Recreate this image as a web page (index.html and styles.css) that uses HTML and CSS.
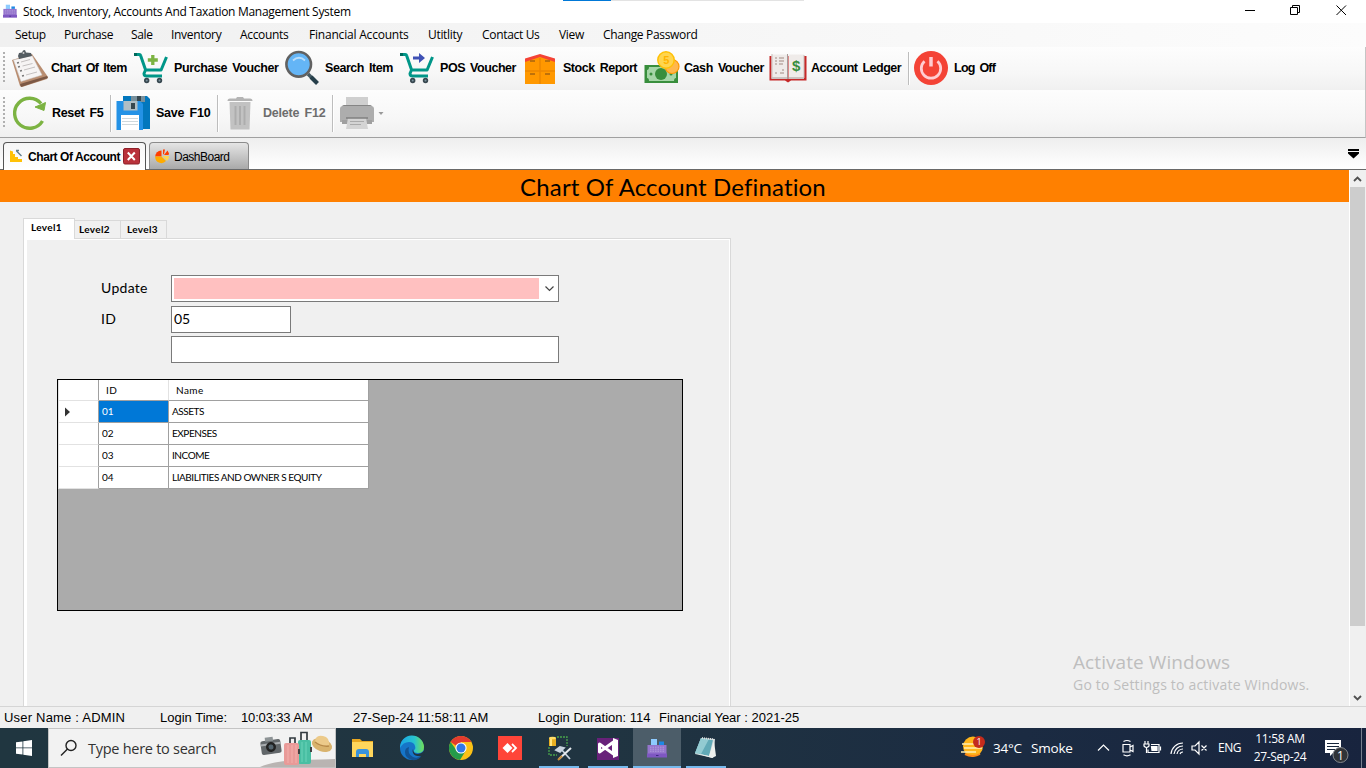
FILE: index.html
```html
<!DOCTYPE html>
<html lang="en">
<head>
<meta charset="utf-8">
<title>Stock, Inventory, Accounts And Taxation Management System</title>
<link rel="stylesheet" href="styles.css">
</head>
<body>
<svg class="defs" width="0" height="0">
  <defs>
    <symbol id="register" viewBox="0 0 20 20">
      <path d="M4 1h6v7H4z" fill="#8ecbff"/><path d="M12 3.500h5v3.500h-5z" fill="#1e88e5"/>
      <path d="M.500 7h19v9H.500z" fill="#9575cd"/><path d="M0 15.500h20v4H0z" fill="#7e57c2"/>
      <path d="M3 9.200h14M3 11.200h14M3 13.200h14" stroke="#b39ddb" stroke-width="1" stroke-dasharray="1.500 1"/><path d="M9 17.500h2.500" stroke="#3f2a80" stroke-width="1"/>
    </symbol>
    <symbol id="cart" viewBox="0 0 40 40">
      <path d="M1 6.500h4.300q1 0 1.300 1l5 14.500h15.500L32.500 9M11.500 22l-1.500 3.500q0 2.500 2.500 2.500H28" fill="none" stroke="#009688" stroke-width="3" stroke-linejoin="round"/>
      <path d="M0 6.500h3" stroke="#00695c" stroke-width="3"/>
      <circle cx="12.700" cy="32.500" r="2.700" fill="#37474f"/><circle cx="25.500" cy="32.500" r="2.700" fill="#37474f"/>
      <circle cx="12.700" cy="32.500" r="1" fill="#78909c"/><circle cx="25.500" cy="32.500" r="1" fill="#78909c"/>
    </symbol>
  </defs>
</svg>
<div class="window">
  <header class="titlebar">
    <svg class="app-icon" width="14" height="14"><use href="#register"/></svg>
    <span class="title">Stock, Inventory, Accounts And Taxation Management System</span>
    <div class="loading"></div>
    <svg class="controls" width="120" height="23" viewBox="0 0 120 23" fill="none" stroke="#000">
      <path d="M4 10.500h10M49.500 7.500h7v7h-7zM51.500 7v-1.500h7v7H57M95.500 5.500l9.500 9.500M105 5.500L95.500 15"/>
    </svg>
  </header>
  <nav class="menu">
    <span>Setup</span><span>Purchase</span><span>Sale</span><span>Inventory</span><span>Accounts</span><span>Financial Accounts</span><span>Utitlity</span><span>Contact Us</span><span>View</span><span>Change Password</span>
  </nav>
  <div class="toolbar main-tools">
    <i class="grip"></i>
    <div class="tool t1"><svg width="40" height="40" viewBox="0 0 40 40">
      <path d="M1 12l20-6 16 23-1 2-25 8-2-1z" fill="#b98d70"/><path d="M9 36l27-8 1 2-27 9z" fill="#7b5845"/>
      <path d="M2.500 12L21 7.500 31 27 10 33.500z" fill="#f6f4f4" stroke="#ccc" stroke-width=".5"/>
      <path d="M7 8l1-3 3-.5 1-2 2-.5 1 2.500 5 .5 1 3-13 3z" fill="#545c61"/><circle cx="12.500" cy="5" r="1" fill="#ccc"/>
      <path d="M6 15l2-.5M7 19l2-.5M9 23l2-.5M11 28l2-.5" stroke="#777" stroke-width="1.600"/><path d="M10 14l9-2.500M11.500 18l10-2.500M13 22l11-3M15 27l11-3" stroke="#c4c0c0"/>
    </svg><span>Chart Of Item</span></div>
    <div class="tool t2"><svg width="40" height="40" viewBox="0 0 40 40"><use href="#cart"/><path d="M18.800 7v10M13.800 12h10" stroke="#7cb342" stroke-width="3.300"/></svg><span>Purchase Voucher</span></div>
    <div class="tool t3"><svg width="40" height="40" viewBox="0 0 40 40">
      <path d="M23 26l9 9" stroke="#455a64" stroke-width="3.500"/><path d="M26 29l6.500 6.500" stroke="#263f4a" stroke-width="4"/>
      <circle cx="13.700" cy="16.300" r="12.300" fill="#64b5f6" stroke="#616161" stroke-width="2.600"/><path d="M8 12.500q6-5.500 12 0" fill="none" stroke="#bbdefb" stroke-width="1.800"/>
    </svg><span>Search Item</span></div>
    <div class="tool t4"><svg width="40" height="40" viewBox="0 0 40 40"><use href="#cart"/><path d="M13 8.500h6v-3.500l6 5-6 5v-3.500h-6z" fill="#3f51b5"/></svg><span>POS Voucher</span></div>
    <div class="tool t5"><svg width="38" height="40" viewBox="0 0 38 40">
      <path d="M0 13L15 7l15 6v23H0z" fill="#ff9800"/><path d="M15 10v26M0 23h30" stroke="#ed8600" stroke-width="1.500"/><path d="M0 10.500L15 6l15 4.500V14L15 9 0 14z" fill="#f44336"/>
      <path d="M5 13h5M20 13h5M5 26h5M20 26h5" stroke="#7d4b14"/>
    </svg><span>Stock Report</span></div>
    <div class="tool t6"><svg width="40" height="40" viewBox="0 0 40 40">
      <path d="M.500 17h33.500v18H.500z" fill="#388e3c"/><path d="M5 19h25q0 3 2 3v8q-2 0-2 3H5q0-3-2-3v-8q2 0 2-3z" fill="#a5d6a7"/><circle cx="17" cy="26" r="6" fill="#388e3c"/><circle cx="7" cy="26" r="1.500" fill="#388e3c"/><circle cx="27" cy="26" r="1.500" fill="#388e3c"/>
      <circle cx="28" cy="18.500" r="7" fill="#ffb74d" stroke="#ff9800" stroke-width="1.200"/><circle cx="22" cy="12" r="8.200" fill="#ffd54f" stroke="#ffc107" stroke-width="1.500"/><text class="coin" x="22" y="16" text-anchor="middle">5</text>
    </svg><span>Cash Voucher</span></div>
    <div class="tool t7"><svg width="42" height="40" viewBox="0 0 42 40">
      <path d="M.500 8h37v24.500H22l-3 2-3-2H.500z" fill="#c62828"/><path d="M2.500 6.500h15.500V31H2.500zM19.500 6.500H35V31H19.500z" fill="#efebe9"/><path d="M18.500 6v25M2 30h33" stroke="#a69a98"/><path d="M3 6v24M35 7v23" stroke="#cbbfbc"/>
      <path d="M6 10h2M10 10h5M6 13h2M10 13h5M6 16h2M10 16h4M13 22h2M6 25h2M11 25h4" stroke="#bcaaa4" stroke-width="1.300"/><text class="dollar" x="27" y="22.500" text-anchor="middle">$</text>
    </svg><span>Account Ledger</span></div>
    <i class="sep s1"></i>
    <div class="tool t8"><svg width="40" height="40" viewBox="0 0 40 40"><circle cx="17" cy="20" r="17" fill="#f44336"/><path d="M10.500 13.300a9.700 9.700 0 1 0 13 0" fill="none" stroke="#ffcdd2" stroke-width="2.800"/><path d="M17 9v9.500" stroke="#ffcdd2" stroke-width="3.500"/></svg><span>Log Off</span></div>
  </div>
  <div class="toolbar edit-tools">
    <i class="grip"></i>
    <div class="tool e1"><svg width="40" height="40" viewBox="0 0 40 40"><path d="M29 10.500A15 15 0 1 0 30.500 28" fill="none" stroke="#7cb342" stroke-width="3.400"/><path d="M33.500 9.500l-1.500 8-9-3.500 5-2z" fill="#7cb342" stroke="#7cb342"/></svg><span>Reset F5</span></div>
    <i class="sep s2"></i>
    <div class="tool e2"><svg width="40" height="40" viewBox="0 0 40 40">
      <path d="M7 3h24l3 3v30H7z" fill="#0277bd"/><path d="M15 3h14v6H15z" fill="#78909c"/><path d="M21 3h4v5h-4z" fill="#37474f"/>
      <path d="M.500 8H24l3 3v26H.500z" fill="#2492e6"/><path d="M7.500 8h14v9.500h-14z" fill="#b0bec5"/><path d="M15 10h4v6h-4z" fill="#37474f"/><path d="M5 22h18v15H5z" fill="#fff"/><path d="M6 25.500h16M6 28.500h16M6 31.500h16" stroke="#cfd8dc"/>
    </svg><span>Save F10</span></div>
    <i class="sep s3"></i>
    <div class="tool e3"><svg width="36" height="40" viewBox="0 0 36 40"><path d="M.500 8q0-2.500 2.500-2.500h6l1-1.500h6l1 1.500h6q2.500 0 2.500 2.500z" fill="#b4b4b4"/><path d="M2.500 9h21l-1 27.500h-19z" fill="#c2c2c2"/><path d="M8.500 13v19M13 13v19M17.500 13v19" stroke="#adadad" stroke-width="2"/></svg><span>Delete F12</span></div>
    <i class="sep s4"></i>
    <svg class="printer" width="46" height="40" viewBox="0 0 46 40"><path d="M6 4h22v10H6z" fill="#cfcfcf"/><path d="M2 14q0-2 2-2h26q2 0 2 2z" fill="#858585"/><path d="M0 16q0-3 3-3h28q3 0 3 3v13H0z" fill="#adadad"/><path d="M2 27h30v4H2z" fill="#a0a0a0"/><path d="M8 25h18l2 11H6z" fill="#d4d4d4"/><path d="M10 28.500h14M10 31.500h11" stroke="#aaa"/><path d="M6 25h22" stroke="#808080" stroke-width="1.500"/><path d="M38.500 19h5l-2.500 3z" fill="#999"/></svg>
  </div>
  <div class="doc-tabs">
    <div class="doc-tab active"><svg width="15" height="15" viewBox="0 0 15 15"><path d="M1 1.500l3 1v2.500h2v3h3v2h4V13H1z" fill="#ffc107"/><path d="M7 1.500h3M7.500 2l5 5" stroke="#607d8b" stroke-width="1.400"/></svg><span>Chart Of Account</span><svg class="close" width="17" height="17" viewBox="0 0 17 17"><rect x=".5" y=".5" width="16" height="15.500" rx="1.500" fill="#b9313b" stroke="#8d2029"/><path d="M4.800 4.500l7 7.500M11.800 4.500l-7 7.500" stroke="#fff" stroke-width="2"/></svg></div>
    <div class="doc-tab"><svg width="15" height="15" viewBox="0 0 15 15"><path d="M6.500 7.500V1.500A6 6 0 0 0 .200 7.500z" fill="#ff3d00"/><path d="M.200 7.500h6.300l4.500 4.500A6.200 6.200 0 0 1 .200 7.500z" fill="#ffab00"/><path d="M7.500 7h6.500q0 3-2 5z" fill="#ffd54f"/><path d="M8 5.500V.500h2L9 5zM9 6l3.500-4.500 1.500 3-.5 1.500z" fill="#ff3d00"/></svg><span>DashBoard</span></div>
    <svg class="overflow" width="12" height="11" viewBox="0 0 12 11"><path d="M0 1h11v2H0zM0 4h11v1.500l-5.500 5L0 5.500z"/></svg>
  </div>
  <main class="content">
    <section class="page">
      <h1>Chart Of Account Defination</h1>
      <div class="levels">
        <div class="level-tabs"><span class="on">Level1</span><span>Level2</span><span>Level3</span></div>
        <div class="panel">
          <div class="fields">
            <label>Update</label><div class="field combo"><i></i><svg width="17" height="20" viewBox="0 0 17 20"><path d="M6.500 8.500l4 4 4-4" fill="none" stroke="#444" stroke-width="1.200"/></svg></div>
            <label>ID</label><div class="field short">05</div>
            <label></label><div class="field"></div>
          </div>
          <div class="datagrid">
            <table>
              <tr class="head"><td></td><td>ID</td><td>Name</td></tr>
              <tr><td><svg width="6" height="10" viewBox="0 0 6 10"><path d="M0 0.500l5 4.500-5 4.500z" fill="#333"/></svg></td><td class="selected">01</td><td>ASSETS</td></tr>
              <tr><td></td><td>02</td><td>EXPENSES</td></tr>
              <tr><td></td><td>03</td><td>INCOME</td></tr>
              <tr><td></td><td>04</td><td>LIABILITIES AND OWNER S EQUITY</td></tr>
            </table>
          </div>
        </div>
      </div>
    </section>
    <div class="scroll"><svg width="15" height="17" viewBox="0 0 15 17"><path d="M4 11l3.500-3.500L11 11" fill="none" stroke="#505050" stroke-width="1.800"/></svg><i></i><svg width="15" height="17" viewBox="0 0 15 17"><path d="M4 7l3.500 3.500L11 7" fill="none" stroke="#505050" stroke-width="1.800"/></svg></div>
    <div class="watermark"><p class="wm-title">Activate Windows</p><p class="wm-note">Go to Settings to activate Windows.</p></div>
  </main>
  <div class="status"><span class="user">User Name : ADMIN</span><span>Login Time:</span><span class="login">10:03:33 AM</span><span>27-Sep-24 11:58:11 AM</span><span>Login Duration: 114</span><span>Financial Year : 2021-25</span></div>
  <footer class="taskbar">
    <div class="start"><svg width="16" height="16" viewBox="0 0 16 16" fill="#fff"><path d="M0 2.300l6.500-.9v6.100H0zM7.300 1.300L16 0v7.500H7.300zM0 8.300h6.500v6.300L0 13.700zM7.300 8.300H16V16l-8.700-1.200z"/></svg></div>
    <div class="search">
      <svg width="18" height="18" viewBox="0 0 18 18" fill="none" stroke="#222" stroke-width="1.400"><circle cx="11" cy="6.500" r="5"/><path d="M7.500 10L1 16.500"/></svg>
      <span>Type here to search</span>
      <svg class="travel" width="75" height="38" viewBox="0 0 75 38">
        <path d="M0 38Q12 32 42 31T75 30v8z" fill="#b9b4b2"/>
        <g transform="rotate(-8 11 18)"><rect x="1" y="11" width="20" height="14" rx="2" fill="#62676a"/><path d="M6 8h8v4H6z" fill="#8d9395"/><path d="M1 14h20v2H1z" fill="#a9adb0"/><circle cx="11" cy="18" r="5" fill="#222"/><circle cx="11" cy="18" r="2.500" fill="#53636d"/></g>
        <path d="M30 15V9h5v6M41 12V3.500h6V12" fill="none" stroke="#333b40" stroke-width="1.700"/>
        <rect x="38" y="11" width="13" height="24" rx="2" fill="#49bfa3"/><path d="M42 13v20M46 13v20" stroke="#6dd3b9"/><rect x="24" y="14" width="15" height="22" rx="2" fill="#e99a98"/><path d="M28 16v18M32 16v18M36 16v18" stroke="#f4b0ac"/>
        <path d="M39 20v5M51 18v5" stroke="#424242" stroke-width="2"/>
        <ellipse cx="62" cy="16" rx="10.500" ry="6.500" transform="rotate(20 62 16)" fill="#d9b36d"/><path d="M55 14q0-9 8-7 7 1 6 10-8 2-14-3z" fill="#ecca8a"/><path d="M55 13q6 5 14 4" fill="none" stroke="#b88b49" stroke-width="1.500"/>
      </svg>
    </div>
    <div class="apps">
      <div><svg width="24" height="24" viewBox="0 0 24 24"><path d="M1 3h8l2 2h11v16H1z" fill="#e9a821"/><path d="M1 6h21v15H1z" fill="#ffd65c"/><path d="M5 21v-5q0-3 3-3h7q3 0 3 3v5h-3v-3H8v3z" fill="#3993dd"/></svg></div>
      <div><svg width="26" height="26" viewBox="0 0 26 26"><defs><linearGradient id="edge" x1="0" x2="1"><stop offset="0" stop-color="#1aa5e6"/><stop offset=".6" stop-color="#28c4cf"/><stop offset="1" stop-color="#73df55"/></linearGradient></defs><circle cx="13" cy="13" r="12" fill="#1675c8"/><path d="M1 13A12 12 0 0 1 25 12q0 6-6 6-5 0-4-3 2-1 1-4-1-4-6-4-6 0-9 6z" fill="url(#edge)"/><path d="M10 12q-2 7 4 10 5 2 9-2-3 6-10 5-7-2-7-8 0-4 4-5z" fill="#125394"/><path d="M14 14q0 5 5 5 3 0 6-3l1 3-3 2q-7 1-9-3-1-2 0-4z" fill="#203441"/></svg></div>
      <div><svg width="24" height="24" viewBox="0 0 24 24"><circle cx="12" cy="12" r="12" fill="#fbc116"/><path d="M1.600 6A12 12 0 0 1 22.400 6H12v7z" fill="#e33b2e"/><path d="M1.600 6A12 12 0 0 0 11 24l5.500-9L12 12l-4 3z" fill="#259b4a"/><circle cx="12" cy="12" r="5.600" fill="#fff"/><circle cx="12" cy="12" r="4.500" fill="#3278e8"/></svg></div>
      <div><svg width="24" height="24" viewBox="0 0 24 24"><path d="M0 0h24v24H0z" fill="#ff4539"/><path d="M9.500 7l5 5-5 5-5-5z" fill="#fff"/><path d="M14 8l4 4-4 4" fill="none" stroke="#fff" stroke-width="1.800"/></svg></div>
      <div class="run"><svg width="25" height="26" viewBox="0 0 25 26"><path d="M10 2h10v9M2 12v8h8" fill="none" stroke="#48a34b" stroke-width="1.300" stroke-dasharray="2 1"/><path d="M2 3h7v8H2z" fill="#e7ae21"/><path d="M3 3h2v8H3z" fill="#ffe580"/><ellipse cx="5.500" cy="3" rx="3.500" ry="1.300" fill="#ffdc66"/><path d="M9 15l4-3 4 1-4 4zM14 14l9 10" fill="#c8d3df" stroke="#c8d3df" stroke-width="1.800"/><path d="M24 13L12 24" stroke="#e5e9ed" stroke-width="2"/><path d="M15 21l-4 4" stroke="#c98d39" stroke-width="2"/></svg></div>
      <div class="run"><svg width="24" height="24" viewBox="0 0 24 24"><path d="M1 2h22v22H1z" fill="#68217a"/><path d="M3.500 8l14 10V6L3.500 16z" fill="none" stroke="#fff" stroke-width="3" stroke-linejoin="round"/><path d="M17 2l5 2v16l-5 2z" fill="#fff"/></svg></div>
      <div class="run current"><svg width="20" height="20"><use href="#register"/></svg></div>
      <div class="run"><svg width="24" height="24" viewBox="0 0 24 24"><path d="M7 2l14 1-2 19L1 18z" fill="#d5dedf"/><path d="M7 2l12 2-4 16-14-3z" fill="#62aab7"/><path d="M7 2l8 1L7 18l-6-1z" fill="#93cbd2"/><path d="M1 17l14 3L20 5l2 15-4 2z" fill="#edf0ed"/><path d="M8 2l12 1.500" stroke="#ddd" stroke-width="2" stroke-dasharray="1 1"/></svg></div>
    </div>
    <div class="weather"><svg width="25" height="22" viewBox="0 0 25 22"><circle cx="12" cy="11.500" r="10" fill="#ffb51b"/><path d="M1 9h16M3 13h18M0 17h15" stroke="#fff0b5" stroke-width="1.700"/><path d="M4 19q8 4 15 0" fill="none" stroke="#ff8b17" stroke-width="2"/><circle cx="18" cy="7" r="6" fill="#c42b1c"/><text class="badge-small" x="18" y="10" text-anchor="middle">1</text></svg><span>34°C</span><span>Smoke</span></div>
    <svg class="tray" width="114" height="24" viewBox="0 0 114 24" fill="none" stroke="#fff" stroke-width="1.200">
      <path d="M2 14.500L7.500 9 13 14.500"/><path d="M27 8.500h7v7.500h-7zM34 11l3-1.500v6L34 14M27.500 5.500q3.500-2 7 0M27.500 18.800q3.500 2 7 0"/><path d="M55 8.500h8v8H52v-3"/><path d="M55.500 10.500H61v4h-5z" fill="#fff"/><path d="M64.500 10.500v4M49 5v3M52 5v3M48 8h5v2q-2.500 3-5 0zM50.500 11v6"/><path d="M75 18A12 12 0 0 1 87 7M78 18a9 9 0 0 1 9-8M81 18a6 6 0 0 1 6-5M84 18a3 3 0 0 1 3-2"/><path d="M96 10h3l4-4v12l-4-4h-3zM105.500 9.500l5 5M110.500 9.500l-5 5"/>
    </svg>
    <span class="lang">ENG</span>
    <div class="clock"><span>11:58 AM</span><span>27-Sep-24</span></div>
    <svg class="notice" width="26" height="26" viewBox="0 0 26 26"><path d="M0 3h16v13H8l-3 3v-3H0z" fill="#fff"/><path d="M2 6.500h12M2 9.500h12M2 12.500h8" stroke="#17263b"/><circle cx="15.500" cy="18" r="7.500" fill="#303338" stroke="#84888d"/><text class="badge" x="15.500" y="22.500" text-anchor="middle">1</text></svg>
    <i class="edge"></i>
  </footer>
</div>
</body>
</html>
```
FILE: styles.css
```css
* { box-sizing: border-box; }
body { margin: 0; overflow: hidden; color: #000; font-family: "Open Sans", "Noto Sans", sans-serif; font-size: 12px; }
svg { display: block; flex: none; }
i { display: block; flex: none; }
span { white-space: nowrap; }
.defs { position: absolute; }
.window { width: 1366px; height: 768px; display: flex; flex-direction: column; background: #f0f0f0; }
.titlebar { height: 23px; flex: none; display: flex; background: #fff; padding-left: 3px; }
.app-icon { margin-top: 4px; }
.title { width: 546px; padding: 3px 0 0 6px; line-height: 17px; letter-spacing: -.29px; }
.loading { width: 241px; height: 1px; background: linear-gradient(90deg, #0078d7 48px, #e3e3e3 48px); }
.controls { margin-left: auto; margin-right: 5px; }
.menu { height: 24px; flex: none; display: grid; grid-template-columns: 49px 67px 40px 69px 69px 119px 54px 77px 44px 120px; padding-left: 15px; line-height: 24px; letter-spacing: -.32px; background: linear-gradient(90deg, #f0f0f0, #fcfcfc); }
.menu span:nth-child(6) { letter-spacing: -.2px; }

.toolbar { flex: none; display: flex; align-items: center; background: linear-gradient(#fdfdfd, #f7f7f7 60%, #f0f0f0); font: bold 12.500px "Liberation Sans", sans-serif; word-spacing: 2px; border-right: 1px solid #c5c5c5; }
.main-tools { height: 43px; padding-bottom: 1px; }
.edit-tools { height: 48px; padding-bottom: 1px; border-bottom: 1px solid #a0a0a0; }
.grip { width: 2px; height: 32px; margin-left: 3px; background: repeating-linear-gradient(#b0b0b0 0 2px, transparent 2px 4px); }
.tool { display: flex; align-items: center; }
.t1 { width: 123px; margin-left: 6px; letter-spacing: -.57px; }
.t2 { width: 151px; letter-spacing: -.4px; }
.t3 { width: 115px; letter-spacing: -.45px; }
.t4 { width: 125px; letter-spacing: -.45px; }
.t5 { width: 119px; letter-spacing: -.48px; }
.t6 { width: 125px; letter-spacing: -.43px; }
.t7 { width: 139px; letter-spacing: -.5px; }
.t8 { letter-spacing: -.75px; }
.sep { width: 2px; height: 33px; border-left: 1px solid #bdbdbd; border-right: 1px solid #fff; }
.s1 { margin-right: 4px; }
.coin { font: bold 11px "Liberation Sans", sans-serif; fill: #ffb300; }
.dollar { font: bold 15px "Liberation Sans", sans-serif; fill: #388e3c; }
.e1 { width: 98px; margin-left: 7px; letter-spacing: -.35px; }
.s2, .s3, .s4 { height: 37px; }
.s2 { margin-right: 4px; }
.e2 { width: 101px; letter-spacing: -.22px; }
.s3 { margin-right: 8px; }
.e3 { width: 105px; color: #6d6d6d; letter-spacing: -.2px; }
.s4 { margin-right: 6px; }

.doc-tabs { height: 32px; flex: none; display: flex; align-items: flex-end; padding-left: 3px; background: linear-gradient(#eee, #fff); border-bottom: 1px solid #696969; font: 12px "Liberation Sans", sans-serif; }
.doc-tab { height: 27px; width: 100px; display: flex; align-items: center; padding-left: 5px; border: 1px solid #8b8b8b; border-bottom: 0; border-radius: 4px 4px 0 0; background: linear-gradient(#e5e5e5, #a9a9a9); letter-spacing: -.5px; }
.doc-tab span { margin-left: 4px; padding-top: 1px; }
.doc-tab.active { width: 143px; height: 28px; margin: 0 3px -1px 0; border-color: #555; background: linear-gradient(#f6f6f6, #fff); font-weight: bold; letter-spacing: -.43px; }
.doc-tab .close { margin-left: 3px; }
.overflow { margin: 0 6px 10px auto; }

.content { height: 536px; flex: none; display: flex; position: relative; overflow: hidden; }
.page { width: 1349px; }
h1 { height: 32px; margin: 0; background: #ff8000; font: 24px/34px Lato, sans-serif; text-align: center; letter-spacing: .14px; padding-right: 3px; }
.levels { width: 708px; margin: 16px 0 0 23px; font-family: Lato, sans-serif; }
.level-tabs { height: 21px; display: flex; align-items: flex-end; margin-bottom: -1px; font-size: 10px; font-weight: bold; letter-spacing: .35px; }
.level-tabs span { height: 19px; width: 46px; padding-left: 4px; border: 1px solid #d9d9d9; border-left: 0; line-height: 17px; }
.level-tabs span:last-child { padding-left: 6px; }
.level-tabs .on { height: 21px; width: 52px; padding-left: 7px; border-left: 1px solid #d9d9d9; border-bottom: 0; background: #fff; line-height: 17px; position: relative; }
.panel { height: 480px; border: 1px solid #d9d9d9; padding: 36px 0 0 33px; box-shadow: inset 3px 1px #fff, inset -1px 0 #fff; }
.fields { display: grid; grid-template-columns: 70px 388px; row-gap: 3px; padding-left: 44px; font-size: 14px; }
.fields label { line-height: 25px; letter-spacing: .3px; }
.field { height: 27px; border: 1px solid #7a7a7a; background: #fff; line-height: 24px; padding-left: 2px; letter-spacing: 0; }
.fields .field:nth-child(2) { margin-bottom: 1px; }
.short { width: 120px; }
.combo { display: flex; padding: 2px 1px 2px 2px; }
.combo i { width: 365px; background: #ffc0c0; }
.datagrid { width: 626px; height: 232px; margin-top: 16px; border: 1px solid #000; background: #ababab; }
table { width: 311px; border-spacing: 0; table-layout: fixed; background: #fff; font-size: 10px; }
td { height: 22px; padding: 0 0 0 3px; border-right: 1px solid #a0a0a0; border-bottom: 1px solid #a0a0a0; line-height: 19px; white-space: nowrap; letter-spacing: -.45px; }
td:nth-child(2) { width: 70px; letter-spacing: 0; }
td:first-child { width: 41px; padding-left: 6px; border-bottom-color: #e2e2e2; border-left: 1px solid #e2e2e2; }
.head td { height: 21px; padding: 0 0 0 7px; letter-spacing: .45px; }
.head td:nth-child(2) { border-right-color: #e2e2e2; }
.selected { background: #0078d7; color: #fff; }
tr:not(.head) td { vertical-align: top; padding-top: 1px; }
tr td:first-child svg { margin-top: 5px; }
.scroll { width: 17px; display: flex; flex-direction: column; border-left: 1px solid #fff; background: #f0f0f0; }
.scroll i { width: 15px; height: 439px; margin-bottom: 63px; background: #cdcdcd; }
.watermark { position: absolute; left: 1073px; top: 479px; color: #bebebe; }
.watermark p { margin: 0; white-space: nowrap; }
.wm-title { font-size: 19px; line-height: 26px; letter-spacing: .08px; }
.wm-note { font-size: 14px; line-height: 20px; letter-spacing: .2px; }

.status { height: 22px; flex: none; display: grid; grid-template-columns: 156px 81px 112px 185px 121px 200px; padding-left: 4px; border-top: 1px solid #d5d5d5; font: 13px/21px "Liberation Sans", sans-serif; }
.user { letter-spacing: .2px; }
.login { letter-spacing: -.15px; }
.taskbar { height: 40px; flex: none; display: flex; background: linear-gradient(90deg, #203640, #203441 45%, #1b2b42 75%, #18243e); color: #fff; }
.start { width: 48px; padding: 12px 16px; }
.search { width: 288px; display: flex; align-items: center; padding-left: 11px; border: 1px solid #c4c4c4; background: #f2f2f2; color: #333; font-size: 14.500px; letter-spacing: -.27px; }
.search span { width: 182px; padding-left: 10px; }
.apps { display: grid; grid-template-columns: repeat(8, 48px); column-gap: 1px; margin-left: 3px; }
.apps div { display: grid; place-items: center; }
.run { background: linear-gradient(#76b9ed, #76b9ed) center bottom / 40px 2px no-repeat; }
.apps .current { background: linear-gradient(#76b9ed, #76b9ed) center bottom / 48px 2px no-repeat, #4c5d69; }
.weather { width: 142px; display: flex; align-items: center; margin-left: 231px; font-size: 13.500px; letter-spacing: -.2px; }
.weather svg { margin-top: -5px; }
.weather span { width: 38px; padding-left: 7px; }
.badge-small { font: 9px "Open Sans", sans-serif; fill: #fff; }
.tray { margin: 8px 0 0 -7px; }
.lang { width: 27px; margin-left: 8px; line-height: 40px; font-size: 12px; letter-spacing: -.5px; }
.clock { width: 70px; display: flex; flex-direction: column; align-items: center; margin: 2px 0 0 0; line-height: 18px; letter-spacing: -.35px; }
.notice { margin: 9px 0 0 10px; }
.badge { font: 12px "Open Sans", sans-serif; fill: #fff; }
.edge { width: 1px; height: 40px; margin-left: auto; margin-right: 4px; background: #77808f; }
```
